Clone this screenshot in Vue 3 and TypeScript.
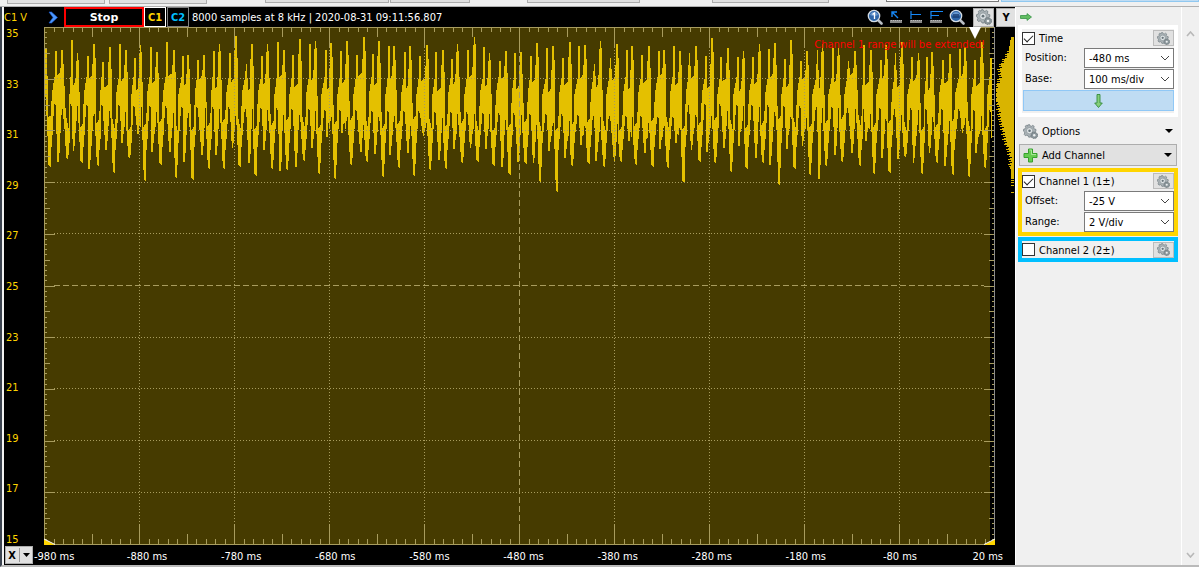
<script setup lang="ts">
import { ref } from 'vue'

type Point = [number, number]

const voltLabels = [35, 33, 31, 29, 27, 25, 23, 21, 19, 17, 15]
const timeLabels = ['-980 ms', '-880 ms', '-780 ms', '-680 ms', '-580 ms', '-480 ms', '-380 ms', '-280 ms', '-180 ms', '-80 ms', '20 ms']

const timeOn = ref(true)
const channels = ref([
  { id: 1, name: 'Channel 1 (1±)', on: true, tone: 'gold', open: true },
  { id: 2, name: 'Channel 2 (2±)', on: false, tone: 'cyan', open: false },
])

// Plot space: 951 x 518 units.
const W = 950
const H = 517

// One row per mains cycle, in thirds of a unit:
// main trough x/y, first crest x/y, second trough x/y, second crest x/y.
const segments: { start: number; rows: number[][] }[] = [
  {
    start: -4,
    rows: [
      [28, 425, 47, 78, 54, 410, 66, 75], [81, 405, 95, 45, 100, 377, 112, 84],
      [124, 413, 143, 93, 147, 431, 162, 57], [173, 423, 188, 111, 198, 375, 209, 66],
      [221, 446, 240, 57, 246, 353, 257, 75], [267, 402, 284, 99, 294, 327, 301, 60],
      [314, 470, 332, 66, 336, 380, 350, 80], [361, 420, 380, 51, 389, 380, 401, 75],
      [408, 461, 428, 93, 432, 410, 444, 90], [457, 464, 474, 105, 486, 390, 491, 90],
      [506, 434, 521, 78, 528, 390, 538, 57], [551, 434, 570, 84, 577, 368, 587, 33],
      [598, 425, 619, 117, 627, 413, 635, 57], [646, 452, 666, 93, 672, 375, 682, 57],
      [696, 434, 714, 51, 720, 437, 731, 75], [741, 437, 759, 90, 767, 425, 779, 42],
      [791, 410, 810, 57, 816, 370, 826, 48], [837, 449, 857, 75, 860, 335, 873, 54],
      [885, 464, 903, 78, 906, 323, 921, 48],
    ],
  },
  {
    start: 306,
    rows: [
      [3, 422, 21, 90, 32, 380, 42, 36], [50, 413, 68, 87, 75, 386, 86, 48],
      [99, 458, 117, 63, 120, 390, 132, 63], [146, 431, 165, 81, 173, 383, 180, 63],
      [192, 455, 210, 93, 220, 332, 231, 60], [240, 437, 258, 81, 267, 404, 278, 75],
      [287, 434, 306, 102, 312, 372, 322, 57], [336, 416, 354, 75, 361, 369, 373, 36],
      [382, 410, 402, 66, 407, 372, 418, 84], [430, 422, 449, 108, 456, 425, 467, 78],
      [478, 449, 495, 84, 504, 410, 512, 81], [526, 416, 543, 93, 550, 413, 561, 54],
      [570, 473, 591, 69, 597, 377, 609, 63],
    ],
  },
  {
    start: 511,
    rows: [
      [5, 503, 24, 99, 30, 398, 44, 51], [51, 425, 72, 63, 78, 360, 90, 60],
      [100, 416, 118, 117, 123, 407, 136, 48], [147, 428, 166, 99, 178, 407, 186, 57],
      [197, 413, 215, 75, 222, 347, 231, 63], [242, 422, 261, 90, 269, 383, 281, 63],
      [292, 425, 311, 78, 315, 372, 327, 75], [338, 431, 356, 63, 363, 353, 375, 78],
      [385, 473, 403, 84, 409, 374, 423, 63], [433, 410, 453, 93, 456, 380, 471, 39],
      [480, 416, 498, 96, 507, 368, 518, 69], [528, 443, 548, 96, 551, 362, 565, 78],
      [574, 431, 594, 96, 602, 398, 613, 57],
    ],
  },
  {
    start: 716,
    rows: [
      [8, 416, 27, 72, 30, 419, 44, 54], [57, 482, 75, 102, 80, 371, 93, 45],
      [103, 431, 122, 108, 127, 362, 141, 78], [150, 452, 172, 75, 176, 461, 187, 57],
      [198, 425, 219, 69, 225, 389, 235, 69], [246, 413, 265, 108, 276, 383, 285, 78],
      [299, 425, 312, 60, 318, 347, 332, 75], [342, 449, 363, 105, 366, 398, 378, 60],
      [388, 443, 406, 84, 414, 401, 425, 51], [435, 398, 456, 96, 460, 413, 475, 84],
      [486, 449, 501, 96, 508, 383, 516, 81], [530, 416, 549, 105, 555, 422, 570, 87],
      [578, 452, 600, 72, 607, 323, 615, 66], [627, 458, 645, 105, 648, 383, 665, 50],
      [675, 431, 692, 100, 699, 419, 712, 78],
    ],
  },
]

const cycles = segments.flatMap((s) =>
  s.rows.map((r) => r.map((v, i) => (i % 2 === 0 ? v + s.start * 3 : v - 6))),
)

function sampleLine(points: Point[], x: number): number {
  for (let i = 1; i < points.length; i++) {
    const [x1, y1] = points[i]
    if (x <= x1) {
      const [x0, y0] = points[i - 1]
      return x1 === x0 ? y1 : y0 + ((y1 - y0) * (x - x0)) / (x1 - x0)
    }
  }
  return points[points.length - 1][1]
}

function buildWave(): string {
  const top: Point[] = [[0, 62], [8, 66], [13, 270]]
  const bottom: Point[] = [[0, 316], [4, 210], [9, 300]]
  cycles.forEach(([ax, ay, bx, by, cx, cy, dx, dy], i) => {
    const nextX = cycles[i + 1] ? cycles[i + 1][0] : ax + 47
    const dip = 265 + ((i * 37) % 50)
    const notch = 145 + ((i * 29) % 50)
    const inner = 215 + ((i * 41) % 40)
    top.push([ax + 4, dip], [ax + 7, 200], [bx - 4, 150], [bx - 2, by], [bx + 2, by])
    top.push([bx + 4, notch], [dx - 7, notch - 8], [dx - 4, dy + 45], [dx - 2, dy], [dx + 2, dy], [dx + 5, dy + 65], [nextX - 4, dip])
    bottom.push([ax - 3, ay - 6], [ax + 3, ay], [ax + 5, 370], [ax + 9, 325], [bx - 5, inner + 15], [bx - 1, inner + 20])
    bottom.push([cx - 2, cy], [cx + 2, cy], [cx + 5, cy - 40], [Math.max(cx + 7, dx - 4), inner + 80], [Math.max(cx + 10, dx), inner + 20], [nextX - 8, inner + 90])
  })
  let d = ''
  for (let x = 0; x < 948; x++) {
    const px = x * 3 + 1
    const y0 = Math.round(sampleLine(top, px) / 3)
    const y1 = Math.max(y0 + 2, Math.round(sampleLine(bottom, px) / 3))
    d += `M${x} ${y0}h1V${y1}h-1z`
  }
  return d
}

function buildTicks(): string {
  let d = ''
  for (let i = 0; i <= 100; i++) {
    const x = Math.round(i * 9.5)
    const len = i % 10 === 0 ? 20 : i % 5 === 0 ? 10 : 5
    d += `M${x} 0h1v${len}h-1zM${x} ${H - len}h1v${len}h-1z`
    const y = Math.round(i * 5.17)
    const wide = i % 10 === 0 ? 10 : i % 5 === 0 ? 5 : 2
    d += `M0 ${y}h${wide + 1}v1h-${wide + 1}zM${W - wide} ${y}h${wide}v1h-${wide}z`
  }
  return d
}

function buildHistogram(): string {
  const outline: Point[] = [
    [10, 3], [22, 5], [26, 7], [31, 9], [36, 13], [43, 15], [48, 14], [53, 15], [58, 18],
    [64, 19], [72, 19], [79, 16], [87, 15], [93, 14], [105, 11], [115, 9], [122, 6], [130, 4], [152, 3],
  ]
  let d = ''
  for (let y = 10; y < 152; y++) {
    const jitter = y > 22 && y < 140 ? ((y * 7) % 5) - 2 : 0
    const w = Math.max(2, Math.min(18, Math.round(sampleLine(outline, y)) + jitter))
    d += `M${19 - w} ${y}h${w}v1h-${w}z`
  }
  return d + 'M16 153h3v1h-3zM16 155h3v1h-3zM16 158h3v1h-3zM16 165h3v1h-3z'
}

const wavePath = buildWave()
const tickPath = buildTicks()
const histPath = buildHistogram()
const gridX = [1, 2, 3, 4, 6, 7, 8, 9].map((i) => i * 95 + 0.5)
const gridY = [1, 2, 3, 4, 6, 7, 8, 9].map((i) => Math.floor(i * 51.7) + 0.5)
const strip = ['b1', 'b2', 'b3', 'b4', 'b5', 'b6']
</script>

<template>
  <div class="app">
    <svg class="defs" aria-hidden="true">
      <defs>
        <symbol id="gear" viewBox="0 0 16 16">
          <path fill="#a9b1b5" stroke="#69757b" stroke-width=".7" d="M5 1l2-.4.7 1.5 1.3.3L10.400 1.400 12 2.600l-.6 1.600.8 1.200 1.600.3v2l-1.500.7-.3 1.200.8 1.500-1.400 1.400-1.500-.6-1.300.6-.6 1.500H6l-.7-1.600-1.200-.5-1.600.6L1.200 11l.7-1.500-.5-1.200L.4 7.500.6 5.600l1.600-.5.7-1.200-.6-1.500 1.200-1 1.200.8z" />
          <circle cx="7" cy="7.200" r="3.300" fill="#dfe4e6" stroke="#7b868b" stroke-width=".6" />
          <circle cx="7" cy="7.200" r="1.400" fill="#67747a" />
          <path fill="#8b969b" stroke="#5e696e" stroke-width=".6" d="M11 8.500l1.200.8 1.500-.4.7 1.200 1.200.5-.3 1.300.4 1.300-1.200.8-.6 1.200-1.400-.1-1.300.6-.9-1-1.400-.4.1-1.400-.6-1.300 1-.8.4-1.500z" />
          <circle cx="12" cy="12" r="1.300" fill="#eceff0" />
        </symbol>
        <symbol id="lens" viewBox="0 0 16 16">
          <path d="M11 11l3.500 3.500" stroke="#b9bec4" stroke-width="2.600" stroke-linecap="round" />
          <circle cx="7" cy="7" r="5.700" fill="#2d65a8" stroke="#d3dbe3" stroke-width="1.300" />
          <path d="M3 6a4.200 4.200 0 0 1 8 0q-4 2-8 0" fill="#7daadb" opacity=".7" />
        </symbol>
        <symbol id="chevron" viewBox="0 0 10 6">
          <path d="M1 1l4 4 4-4" fill="none" stroke="#444" />
        </symbol>
      </defs>
    </svg>

    <div class="strip">
      <span v-for="s in strip" :key="s" class="piece" :class="s"></span>
      <span class="piece field"></span>
      <span class="piece active"></span>
    </div>

    <div class="body">
      <main class="scope">
        <header class="bar">
          <span class="unit">C1 V</span>
          <button class="flat next" aria-label="Next">
            <svg width="10" height="13" viewBox="0 0 10 13"><path d="M1 1l2.500 0L9.500 6.500 3.500 12H1l4-5.500z" fill="#4c98ff" stroke="#1c5bd0" stroke-width=".6" /></svg>
          </button>
          <button class="stop">Stop</button>
          <button class="chan one">C1</button>
          <button class="chan two">C2</button>
          <span class="info">8000 samples at 8 kHz | 2020-08-31 09:11:56.807</span>
          <div class="tools">
            <button class="flat" aria-label="Zoom 1:1">
              <svg width="16" height="16" viewBox="0 0 16 16"><use href="#lens" /><path d="M5.500 5.500L7.500 4v6" fill="none" stroke="#fff" stroke-width="1.300" /></svg>
            </button>
            <button class="flat" aria-label="Cursor">
              <svg width="14" height="14" viewBox="0 0 14 14"><path d="M3 2l6 6M3 7V2h5" fill="none" stroke="#1687f5" stroke-width="1.400" /><path d="M1 10h12v3H1z" fill="#888" /><path d="M2 10.500h11" stroke="#bbb" stroke-dasharray="1 1" /></svg>
            </button>
            <button class="flat" aria-label="Mark one">
              <svg width="14" height="14" viewBox="0 0 14 14"><path d="M2 1v8M2 4.500h10" fill="none" stroke="#1687f5" stroke-width="1.200" /><path d="M1 10h12v3H1z" fill="#888" /><path d="M2 10.500h11" stroke="#bbb" stroke-dasharray="1 1" /></svg>
            </button>
            <button class="flat" aria-label="Mark two">
              <svg width="14" height="14" viewBox="0 0 14 14"><path d="M2 1v8M2 1.500h12M2 5.500h8" fill="none" stroke="#1687f5" stroke-width="1.200" /><path d="M1 10h12v3H1z" fill="#888" /><path d="M2 10.500h11" stroke="#bbb" stroke-dasharray="1 1" /></svg>
            </button>
            <button class="flat" aria-label="Zoom fit">
              <svg width="16" height="16" viewBox="0 0 16 16"><use href="#lens" /><path d="M3.500 8h7M4 6h6" stroke="#183d70" stroke-width="1.400" /></svg>
            </button>
          </div>
          <button class="light cog" aria-label="Settings"><svg width="16" height="16"><use href="#gear" /></svg></button>
          <button class="light why">Y</button>
        </header>

        <div class="middle">
          <div class="volts"><span v-for="v in voltLabels" :key="v">{{ v }}</span></div>
          <div class="plot">
            <svg class="graph" viewBox="0 0 951 518" preserveAspectRatio="none" shape-rendering="crispEdges">
              <rect width="946" height="518" fill="#463b00" />
              <path :d="wavePath" fill="#e4c000" />
              <g stroke="#a89c5e" stroke-dasharray="1 2">
                <path v-for="x in gridX" :key="x" :d="`M${x} 20V498`" />
                <path v-for="y in gridY" :key="y" :d="`M10 ${y}H940`" />
              </g>
              <path d="M475.500 20V498M10 258.500H940" stroke="#a89c5e" stroke-dasharray="6 3" />
              <path :d="tickPath" fill="#a89c5e" />
              <path d="M0 .5H950M.5 0V518M0 517.500H951" stroke="#a89c5e" fill="none" />
              <path d="M950.500 0V518" stroke="#8c8c8c" />
              <g shape-rendering="auto">
                <path d="M0 512L11 518H0zM951 512L940 518h11z" fill="#ffd500" />
                <path d="M0 512L11 517.500M951 512L940 517.500" stroke="#fff" />
                <path d="M925 0h12l-6 12z" fill="#fff" />
              </g>
            </svg>
            <span class="warning">Channel 1 range will be extended!</span>
          </div>
          <svg class="hist" viewBox="0 0 19 518" preserveAspectRatio="none" shape-rendering="crispEdges">
            <path :d="histPath" fill="#d9b400" />
          </svg>
        </div>

        <footer class="foot">
          <button class="light axis"><b>X</b><i></i><svg width="7" height="4" viewBox="0 0 7 4"><path d="M0 0h7L3.500 4z" /></svg></button>
          <div class="times"><span v-for="t in timeLabels" :key="t">{{ t }}</span></div>
        </footer>
      </main>

      <aside class="side">
        <div class="panel">
          <button class="flat dock" aria-label="Dock panel">
            <svg width="12" height="8" viewBox="0 0 12 8"><path d="M.5 2.500h6.500V.6L11.500 4 7 7.400V5.500H.5z" fill="#62bd62" stroke="#379447" stroke-width=".8" /></svg>
          </button>
          <section class="group white">
            <div class="head">
              <input id="time" v-model="timeOn" type="checkbox" /><label for="time">Time</label>
              <button class="gear" aria-label="Time settings"><svg width="13" height="13"><use href="#gear" /></svg></button>
            </div>
            <div class="line">
              <label for="pos">Position:</label>
              <span class="combo"><select id="pos"><option>-480 ms</option></select><svg width="10" height="6"><use href="#chevron" /></svg></span>
            </div>
            <div class="line">
              <label for="base">Base:</label>
              <span class="combo"><select id="base"><option>100 ms/div</option></select><svg width="10" height="6"><use href="#chevron" /></svg></span>
            </div>
            <button class="more" aria-label="Show more">
              <svg width="9" height="14" viewBox="0 0 9 14"><path d="M3 .5h3V9h2.300L4.500 13.500.7 9H3z" fill="#86cf7b" stroke="#348b3b" stroke-width=".9" /></svg>
            </button>
          </section>

          <button class="row options">
            <svg width="15" height="15"><use href="#gear" /></svg><span>Options</span>
            <svg class="caret" width="8" height="4" viewBox="0 0 8 4"><path d="M0 0h8L4 4z" /></svg>
          </button>
          <button class="row add">
            <svg width="15" height="15" viewBox="0 0 15 15"><path d="M5.500 1h4v4.500H14v4H9.500V14h-4V9.500H1v-4h4.500z" fill="#66cc52" stroke="#37a02e" /><path d="M6.500 2h2v4.500H13" fill="none" stroke="#a7e898" /></svg><span>Add Channel</span>
            <svg class="caret" width="8" height="4" viewBox="0 0 8 4"><path d="M0 0h8L4 4z" /></svg>
          </button>

          <section v-for="c in channels" :key="c.id" class="group" :class="c.tone">
            <div class="head">
              <input :id="`ch${c.id}`" v-model="c.on" type="checkbox" /><label :for="`ch${c.id}`">{{ c.name }}</label>
              <button class="gear" :aria-label="`${c.name} settings`"><svg width="13" height="13"><use href="#gear" /></svg></button>
            </div>
            <template v-if="c.open">
              <div class="line">
                <label for="offset">Offset:</label>
                <span class="combo"><select id="offset"><option>-25 V</option></select><svg width="10" height="6"><use href="#chevron" /></svg></span>
              </div>
              <div class="line">
                <label for="range">Range:</label>
                <span class="combo"><select id="range"><option>2 V/div</option></select><svg width="10" height="6"><use href="#chevron" /></svg></span>
              </div>
            </template>
          </section>
        </div>
        <div class="scroll">
          <svg width="9" height="6" viewBox="0 0 9 6"><path d="M1 5l3.500-4L8 5" fill="none" stroke="#b8b8b8" stroke-width="1.600" /></svg>
          <svg width="9" height="6" viewBox="0 0 9 6"><path d="M1 1l3.500 4L8 1" fill="none" stroke="#b8b8b8" stroke-width="1.600" /></svg>
        </div>
      </aside>
    </div>
  </div>
</template>

<style>
body { margin: 0; background: #f0f0f0; }
</style>

<style scoped>
* { box-sizing: border-box; }
.app { display: flex; flex-direction: column; height: 100vh; background: #f0f0f0; color: #000; font: 11px/14px "DejaVu Sans Condensed", "DejaVu Sans", sans-serif; overflow: hidden; }
.defs { position: absolute; width: 0; height: 0; }
button { margin: 0; padding: 0; font: inherit; color: inherit; display: flex; align-items: center; justify-content: center; border: 0; border-radius: 0; flex: none; }
svg { display: block; flex: none; }
.strip { height: 7px; flex: none; display: flex; align-items: flex-start; padding-left: 7px; border-bottom: 1px solid #b0b0b0; }
.piece { height: 3px; flex: none; border: 1px solid #adadad; border-top: 0; background: #e1e1e1; }
.b1, .b2 { width: 98px; height: 4px; margin-right: 4px; }
.b3 { width: 124px; margin-left: 54px; }
.b4 { width: 80px; margin-left: 1px; }
.b5 { width: 113px; margin-left: 57px; }
.b6 { width: 117px; margin-left: 72px; }
.field { width: 113px; height: 2px; margin-left: 57px; background: #fff; border-color: #7a7a7a; }
.active { flex: 1; height: 2px; margin-left: 2px; background: #bfdcf3; border-color: #90c8f0; }
.body { flex: 1; min-height: 0; display: flex; border-left: 2px solid #3c4450; border-bottom: 2px solid #bababa; }
.scope { flex: 1; min-width: 0; display: flex; flex-direction: column; background: #000; color: #fff; border-left: 2px solid #f4f4f4; }
.bar { height: 20px; flex: none; display: flex; align-items: center; }
.unit { width: 44px; padding-top: 2px; color: #ffd500; }
.flat { background: none; }
.next { width: 10px; margin-right: 6px; }
.stop { width: 80px; height: 20px; padding-top: 2px; background: #000; color: #fff; border: 2px solid #f00; font-family: "DejaVu Sans", sans-serif; font-weight: bold; }
.chan { width: 22px; height: 20px; padding-top: 2px; background: #000; font-weight: bold; margin-right: 1px; }
.one { color: #ffd500; border: 1px solid #fff; }
.two { color: #00bfff; border: 1px solid #808080; }
.info { margin-left: 2px; padding-top: 2px; white-space: nowrap; }
.tools { margin-left: auto; display: flex; gap: 6px; margin-right: 8px; }
.light { background: #e1e1e1; color: #000; border: 1px solid #adadad; }
.cog { width: 21px; height: 19px; margin-right: 2px; }
.why { width: 19px; height: 19px; padding-top: 2px; font-weight: bold; border-right: 0; }
.middle { flex: 1; min-height: 0; display: grid; grid-template-columns: 40px minmax(0, 1fr) 20px; grid-template-rows: minmax(0, 1fr); }
.volts { display: flex; flex-direction: column; justify-content: space-between; padding-left: 2px; margin-bottom: -2px; color: #ffd500; }
.plot { position: relative; min-width: 0; min-height: 0; }
.graph, .hist { width: 100%; height: 100%; }
.hist { width: 19px; }
.warning { position: absolute; top: 11px; right: 10px; color: #f00; white-space: nowrap; }
.foot { height: 20px; flex: none; display: flex; align-items: center; padding: 0 12px 0 1px; }
.axis { width: 28px; height: 18px; gap: 3px; }
.axis i { width: 1px; height: 14px; background: #999; }
.axis b { padding-top: 2px; }
.times { flex: 1; display: grid; grid-template-columns: 66px repeat(9, minmax(0, 1fr)) 56px; margin-left: 1px; padding-top: 3px; text-align: center; white-space: nowrap; }
.times span:first-child { text-align: left; }
.times span:last-child { text-align: right; }
.side { width: 184px; flex: none; display: flex; border-left: 1px solid #fff; }
.panel { width: 166px; flex: none; padding: 0 3px 0 2px; border-right: 1px solid #fff; display: flex; flex-direction: column; }
.dock { width: 13px; height: 18px; margin-left: 1px; padding-top: 2px; }
.group { border: 4px solid #fff; }
.white { padding-bottom: 2px; }
.gold { border-color: #ffd500; margin-bottom: 1px; }
.cyan { border-color: #00bfff; }
.head { height: 18px; display: flex; align-items: center; gap: 4px; }
.head label { padding-top: 2px; }
.cyan .head { height: 17px; }
.head input { appearance: none; width: 13px; height: 13px; margin: 0; background: #fff; border: 1px solid #333; display: grid; place-items: center; }
.head input:checked::after { content: ""; width: 8px; height: 4px; border-left: 1px solid #222; border-bottom: 1px solid #222; transform: translateY(-1px) rotate(-45deg); }
.gear { width: 21px; height: 16px; margin-left: auto; background: #e1e1e1; border: 1px solid #bcbcbc; }
.line { height: 21px; display: flex; align-items: center; justify-content: space-between; padding-left: 3px; }
.combo { position: relative; width: 90px; height: 20px; }
.combo svg { position: absolute; right: 4px; top: 7px; pointer-events: none; }
.combo select { appearance: none; width: 100%; height: 20px; margin: 0; padding: 2px 4px 0; border: 1px solid #7a7a7a; border-radius: 0; background: #fff; color: #000; font: inherit; display: block; }
.more { width: 151px; height: 21px; margin: 1px 0 0 1px; background: #bfdcf3; border: 1px solid #90c8f6; }
.row { height: 22px; justify-content: flex-start; gap: 4px; padding: 0 5px 0 4px; background: none; }
.row span { padding-top: 2px; }
.caret { margin-left: auto; }
.options { margin: 3px 0 2px; padding-left: 5px; }
.add { margin: 0 1px 2px; background: #e1e1e1; border: 1px solid #adadad; padding: 0 4px 0 3px; }
.scroll { flex: 1; display: flex; flex-direction: column; justify-content: space-between; align-items: center; padding: 24px 1px 7px 0; }
</style>
